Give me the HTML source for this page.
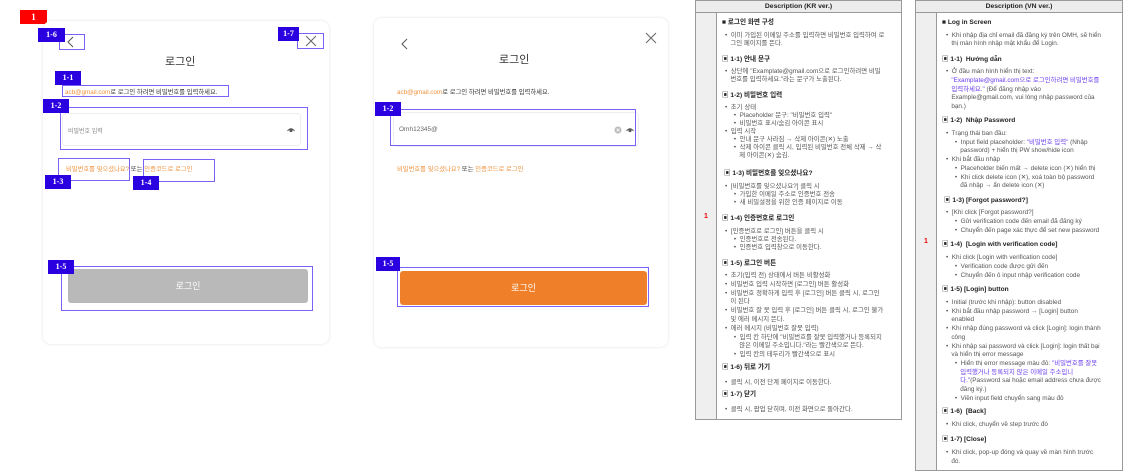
<!DOCTYPE html>
<html><head><meta charset="utf-8"><style>
*{margin:0;padding:0;box-sizing:border-box}
body{width:1126px;height:473px;background:#fff;position:relative;overflow:hidden;font-family:"Liberation Sans","Noto Sans CJK KR",sans-serif;color:#333}
.a{position:absolute;white-space:nowrap}
.card{position:absolute;background:#fff;border-radius:8px;box-shadow:0 0 3px rgba(0,0,0,.12)}
.lbl{position:absolute;background:#2a00e0;color:#fff;font:bold 8px "Liberation Serif",serif;text-align:center;line-height:14px}
.box{position:absolute;border:1.3px solid #7b61f5}
.or{color:#f0913c}
.t{position:absolute;font-size:6.4px;line-height:8px;white-space:nowrap;color:#555}
.h{font-weight:bold;color:#222;font-size:6.6px}
.p{color:#6a3df0}
</style></head><body>
<div class="a" style="left:20px;top:10px;width:27px;height:14px;background:#f00;color:#fff;font:bold 9px 'Liberation Serif';text-align:center;line-height:14px">1</div>

<!-- card 1 -->
<div class="card" style="left:43px;top:21px;width:286px;height:323px"></div>
<svg class="a" style="left:66px;top:36px" width="10" height="12"><path d="M7 1 L2 6 L7 11" fill="none" stroke="#555" stroke-width="1"/></svg>
<svg class="a" style="left:305px;top:35px" width="12" height="12"><path d="M1 1 L11 11 M11 1 L1 11" fill="none" stroke="#666" stroke-width="1"/></svg>
<div class="a" style="left:165px;top:53px;font-size:11px;color:#333">로그인</div>
<div class="a" style="left:65px;top:87px;font-size:6.3px;color:#333"><span class="or">acb@gmail.com</span>로 로그인 하려면 비밀번호를 입력하세요.</div>
<div class="a" style="left:62px;top:113px;width:239px;height:33px;border:1px solid #eee;border-radius:4px"></div>
<div class="a" style="left:68px;top:126px;font-size:6px;color:#888">비밀번호 입력</div>
<svg class="a" style="left:287px;top:127px" width="8" height="6"><path d="M0.5 4 Q4 -0.5 7.5 4" fill="none" stroke="#555" stroke-width="1"/><circle cx="4" cy="3.5" r="1.6" fill="#555"/></svg>
<div class="a" style="left:66px;top:164px;font-size:6.3px"><span class="or">비밀번호를 잊으셨나요?</span> 또는 <span class="or">인증코드로 로그인</span></div>
<div class="a" style="left:68px;top:269px;width:240px;height:34px;background:#b9b9b9;border-radius:3px;color:#fff;font-size:9px;text-align:center;line-height:34px">로그인</div>
<div class="box" style="left:59px;top:34px;width:26px;height:16px"></div>
<div class="lbl" style="left:38px;top:28px;width:27px">1-6</div>
<div class="box" style="left:297px;top:33px;width:27px;height:16px"></div>
<div class="lbl" style="left:278px;top:27px;width:21px">1-7</div>
<div class="box" style="left:62px;top:85px;width:167px;height:12px"></div>
<div class="lbl" style="left:55px;top:71px;width:26px">1-1</div>
<div class="box" style="left:60px;top:107px;width:248px;height:43px"></div>
<div class="lbl" style="left:43px;top:99px;width:26px">1-2</div>
<div class="box" style="left:58px;top:158px;width:72px;height:23px"></div>
<div class="box" style="left:143px;top:159px;width:72px;height:23px"></div>
<div class="lbl" style="left:45px;top:175px;width:26px">1-3</div>
<div class="lbl" style="left:133px;top:176px;width:26px">1-4</div>
<div class="box" style="left:61px;top:266px;width:252px;height:45px"></div>
<div class="lbl" style="left:48px;top:260px;width:26px">1-5</div>

<!-- card 2 -->
<div class="card" style="left:374px;top:18px;width:294px;height:329px"></div>
<svg class="a" style="left:400px;top:38px" width="10" height="12"><path d="M7 1 L2 6 L7 11" fill="none" stroke="#555" stroke-width="1"/></svg>
<svg class="a" style="left:645px;top:32px" width="12" height="12"><path d="M1 1 L11 11 M11 1 L1 11" fill="none" stroke="#666" stroke-width="1"/></svg>
<div class="a" style="left:499px;top:51px;font-size:11px;color:#333">로그인</div>
<div class="a" style="left:397px;top:87px;font-size:6.3px;color:#333"><span class="or">acb@gmail.com</span>로 로그인 하려면 비밀번호를 입력하세요.</div>
<div class="a" style="left:393px;top:112px;width:246px;height:35px;border:1px solid #eee;border-radius:4px"></div>
<div class="a" style="left:399px;top:126px;font-size:6.5px;color:#666">Omh12345@</div>
<svg class="a" style="left:614px;top:126px" width="8" height="8"><circle cx="4" cy="4" r="3.5" fill="#bbb"/><path d="M2.5 2.5 L5.5 5.5 M5.5 2.5 L2.5 5.5" stroke="#fff" stroke-width="0.8"/></svg>
<svg class="a" style="left:626px;top:127px" width="8" height="6"><path d="M0.5 4 Q4 -0.5 7.5 4" fill="none" stroke="#555" stroke-width="1"/><circle cx="4" cy="3.5" r="1.6" fill="#555"/></svg>
<div class="a" style="left:397px;top:164px;font-size:6.3px"><span class="or">비밀번호를 잊으셨나요?</span> 또는 <span class="or">인증코드로 로그인</span></div>
<div class="a" style="left:400px;top:271px;width:247px;height:34px;background:#ef8029;border-radius:3px;color:#fff;font-size:9px;text-align:center;line-height:34px">로그인</div>
<div class="box" style="left:390px;top:109px;width:246px;height:37px"></div>
<div class="lbl" style="left:375px;top:102px;width:26px">1-2</div>
<div class="box" style="left:397px;top:267px;width:252px;height:40px"></div>
<div class="lbl" style="left:376px;top:257px;width:24px">1-5</div>

<!-- KR table -->
<div class="a" style="left:695px;top:0;width:207px;height:420px;border:1px solid #999"></div>
<div class="a" style="left:695px;top:0;width:207px;height:13px;background:#ececec;border:1px solid #999;font-size:6.8px;font-weight:bold;text-align:center;line-height:12px;color:#222">Description (KR ver.)</div>
<div class="a" style="left:696px;top:13px;width:21px;height:406px;background:#efefef;border-right:1px solid #999"></div>
<div class="a" style="left:704px;top:213px;font-size:7px;color:#e00;font-weight:bold">1</div>
<div class="t h" style="left:722px;top:19px">■ 로그인 화면 구성</div>
<div class="t" style="left:725px;top:32px">•&nbsp; 이미 가입된 이메일 주소를 입력하면 비밀번호 입력하여 로<br>&nbsp;&nbsp;&nbsp;그인 페이지를 뜬다.</div>
<div class="t h" style="left:722px;top:56px">▣ 1-1) 안내 문구</div>
<div class="t" style="left:725px;top:68px">•&nbsp; 상단에 "Examplate@gmail.com으로 로그인하려면 비밀<br>&nbsp;&nbsp;&nbsp;번호를 입력하세요."라는 문구가 노출된다.</div>
<div class="t h" style="left:722px;top:92px">▣ 1-2) 비밀번호 입력</div>
<div class="t" style="left:725px;top:104px">•&nbsp; 초기 상태<br>&nbsp;&nbsp;&nbsp;&nbsp;&nbsp;•&nbsp; Placeholder 문구: "비밀번호 입력"<br>&nbsp;&nbsp;&nbsp;&nbsp;&nbsp;•&nbsp; 비밀번호 표시/숨김 아이콘 표시<br>•&nbsp; 입력 시작<br>&nbsp;&nbsp;&nbsp;&nbsp;&nbsp;•&nbsp; 안내 문구 사라짐 → 삭제 아이콘(✕) 노출<br>&nbsp;&nbsp;&nbsp;&nbsp;&nbsp;•&nbsp; 삭제 아이콘 클릭 시, 입력된 비밀번호 전체 삭제 → 삭<br>&nbsp;&nbsp;&nbsp;&nbsp;&nbsp;&nbsp;&nbsp;&nbsp;제 아이콘(✕) 숨김.</div>
<div class="t h" style="left:724px;top:170px">▣ 1-3) 비밀번호를 잊으셨나요?</div>
<div class="t" style="left:725px;top:183px">•&nbsp; [비밀번호를 잊으셨나요?] 클릭 시<br>&nbsp;&nbsp;&nbsp;&nbsp;&nbsp;•&nbsp; 가입한 이메일 주소로 인증번호 전송<br>&nbsp;&nbsp;&nbsp;&nbsp;&nbsp;•&nbsp; 새 비밀설정을 위한 인증 페이지로 이동</div>
<div class="t h" style="left:722px;top:215px">▣ 1-4) 인증번호로 로그인</div>
<div class="t" style="left:725px;top:228px">•&nbsp; [인증번호로 로그인] 버튼을 클릭 시<br>&nbsp;&nbsp;&nbsp;&nbsp;&nbsp;•&nbsp; 인증번호로 전송된다.<br>&nbsp;&nbsp;&nbsp;&nbsp;&nbsp;•&nbsp; 인증번호 입력창으로 이동한다.</div>
<div class="t h" style="left:722px;top:260px">▣ 1-5) 로그인 버튼</div>
<div class="t" style="left:725px;top:272px;line-height:8.8px">•&nbsp; 초기(입력 전) 상태에서 버튼 비활성화<br>•&nbsp; 비밀번호 입력 시작하면 [로그인] 버튼 활성화<br>•&nbsp; 비밀번호 정확하게 입력 후 [로그인] 버튼 클릭 시, 로그인<br>&nbsp;&nbsp;&nbsp;이 된다<br>•&nbsp; 비밀번호 잘 못 입력 후 [로그인] 버튼 클릭 시, 로그인 불가<br>&nbsp;&nbsp;&nbsp;및 에러 메시지 뜬다.<br>•&nbsp; 에러 메시지 (비밀번호 잘못 입력)<br>&nbsp;&nbsp;&nbsp;&nbsp;&nbsp;•&nbsp; 입력 칸 하단에 "비밀번호를 잘못 입력했거나 등록되지<br>&nbsp;&nbsp;&nbsp;&nbsp;&nbsp;&nbsp;&nbsp;&nbsp;않은 이메일 주소입니다."라는 빨간색으로 뜬다.<br>&nbsp;&nbsp;&nbsp;&nbsp;&nbsp;•&nbsp; 입력 칸의 테두리가 빨간색으로 표시</div>
<div class="t h" style="left:722px;top:364px">▣ 1-6) 뒤로 가기</div>
<div class="t" style="left:725px;top:379px">•&nbsp; 클릭 시, 이전 단계 페이지로 이동한다.</div>
<div class="t h" style="left:722px;top:391px">▣ 1-7) 닫기</div>
<div class="t" style="left:725px;top:406px">•&nbsp; 클릭 시, 팝업 닫히며, 이전 화면으로 돌아간다.</div>

<!-- VN table -->
<div class="a" style="left:915px;top:0;width:208px;height:471px;border:1px solid #999"></div>
<div class="a" style="left:915px;top:0;width:208px;height:13px;background:#ececec;border:1px solid #999;font-size:6.8px;font-weight:bold;text-align:center;line-height:12px;color:#222">Description (VN ver.)</div>
<div class="a" style="left:916px;top:13px;width:21px;height:457px;background:#efefef;border-right:1px solid #999"></div>
<div class="a" style="left:924px;top:238px;font-size:7px;color:#e00;font-weight:bold">1</div>
<div class="t h" style="left:942px;top:19px">■ Log in Screen</div>
<div class="t" style="left:946px;top:32px">•&nbsp; Khi nhập địa chỉ email đã đăng ký trên OMH, sẽ hiển<br>&nbsp;&nbsp;&nbsp;thị màn hình nhập mật khẩu để Login.</div>
<div class="t h" style="left:942px;top:56px">▣ 1-1)&nbsp; Hướng dẫn</div>
<div class="t" style="left:946px;top:68px;line-height:8.8px">•&nbsp; Ở đầu màn hình hiển thị text:<br>&nbsp;&nbsp;&nbsp;<span class="p">"Examplate@gmail.com으로 로그인하려면 비밀번호를</span><br>&nbsp;&nbsp;&nbsp;<span class="p">입력하세요."</span> (Để đăng nhập vào<br>&nbsp;&nbsp;&nbsp;Example@gmail.com, vui lòng nhập password của<br>&nbsp;&nbsp;&nbsp;bạn.)</div>
<div class="t h" style="left:942px;top:117px">▣ 1-2)&nbsp; Nhập Password</div>
<div class="t" style="left:946px;top:130px;line-height:8.7px">•&nbsp; Trạng thái ban đầu:<br>&nbsp;&nbsp;&nbsp;&nbsp;&nbsp;•&nbsp; Input field placeholder: <span class="p">"비밀번호 입력"</span> (Nhập<br>&nbsp;&nbsp;&nbsp;&nbsp;&nbsp;&nbsp;&nbsp;&nbsp;password) + hiển thị PW show/hide icon<br>•&nbsp; Khi bắt đầu nhập<br>&nbsp;&nbsp;&nbsp;&nbsp;&nbsp;•&nbsp; Placeholder biến mất → delete icon (✕) hiển thị<br>&nbsp;&nbsp;&nbsp;&nbsp;&nbsp;•&nbsp; Khi click delete icon (✕), xoá toàn bộ password<br>&nbsp;&nbsp;&nbsp;&nbsp;&nbsp;&nbsp;&nbsp;&nbsp;đã nhập → ẩn delete icon (✕)</div>
<div class="t h" style="left:944px;top:197px">▣ 1-3) [Forgot password?]</div>
<div class="t" style="left:946px;top:209px;line-height:8.8px">•&nbsp; [Khi click [Forgot password?]<br>&nbsp;&nbsp;&nbsp;&nbsp;&nbsp;•&nbsp; Gửi verification code đến email đã đăng ký<br>&nbsp;&nbsp;&nbsp;&nbsp;&nbsp;•&nbsp; Chuyển đến page xác thực để set new password</div>
<div class="t h" style="left:942px;top:241px">▣ 1-4)&nbsp; [Login with verification code]</div>
<div class="t" style="left:946px;top:254px;line-height:8.8px">•&nbsp; Khi click [Login with verification code]<br>&nbsp;&nbsp;&nbsp;&nbsp;&nbsp;•&nbsp; Verification code được gửi đến<br>&nbsp;&nbsp;&nbsp;&nbsp;&nbsp;•&nbsp; Chuyển đến ô input nhập verification code</div>
<div class="t h" style="left:942px;top:286px">▣ 1-5) [Login] button</div>
<div class="t" style="left:946px;top:299px;line-height:8.7px">•&nbsp; Initial (trước khi nhập): button disabled<br>•&nbsp; Khi bắt đầu nhập password → [Login] button<br>&nbsp;&nbsp;&nbsp;enabled<br>•&nbsp; Khi nhập đúng password và click [Login]: login thành<br>&nbsp;&nbsp;&nbsp;công<br>•&nbsp; Khi nhập sai password và click [Login]: login thất bại<br>&nbsp;&nbsp;&nbsp;và hiển thị error message<br>&nbsp;&nbsp;&nbsp;&nbsp;&nbsp;•&nbsp; Hiển thị error message màu đỏ: <span class="p">"비밀번호를 잘못</span><br>&nbsp;&nbsp;&nbsp;&nbsp;&nbsp;&nbsp;&nbsp;&nbsp;<span class="p">입력했거나 등록되지 않은 이메일 주소입니</span><br>&nbsp;&nbsp;&nbsp;&nbsp;&nbsp;&nbsp;&nbsp;&nbsp;<span class="p">다."</span>(Password sai hoặc email address chưa được<br>&nbsp;&nbsp;&nbsp;&nbsp;&nbsp;&nbsp;&nbsp;&nbsp;đăng ký.)<br>&nbsp;&nbsp;&nbsp;&nbsp;&nbsp;•&nbsp; Viền input field chuyển sang màu đỏ</div>
<div class="t h" style="left:942px;top:408px">▣ 1-6)&nbsp; [Back]</div>
<div class="t" style="left:946px;top:421px">•&nbsp; Khi click, chuyển về step trước đó</div>
<div class="t h" style="left:942px;top:436px">▣ 1-7) [Close]</div>
<div class="t" style="left:946px;top:449px;line-height:8.8px">•&nbsp; Khi click, pop-up đóng và quay về màn hình trước<br>&nbsp;&nbsp;&nbsp;đó.</div>
</body></html>
